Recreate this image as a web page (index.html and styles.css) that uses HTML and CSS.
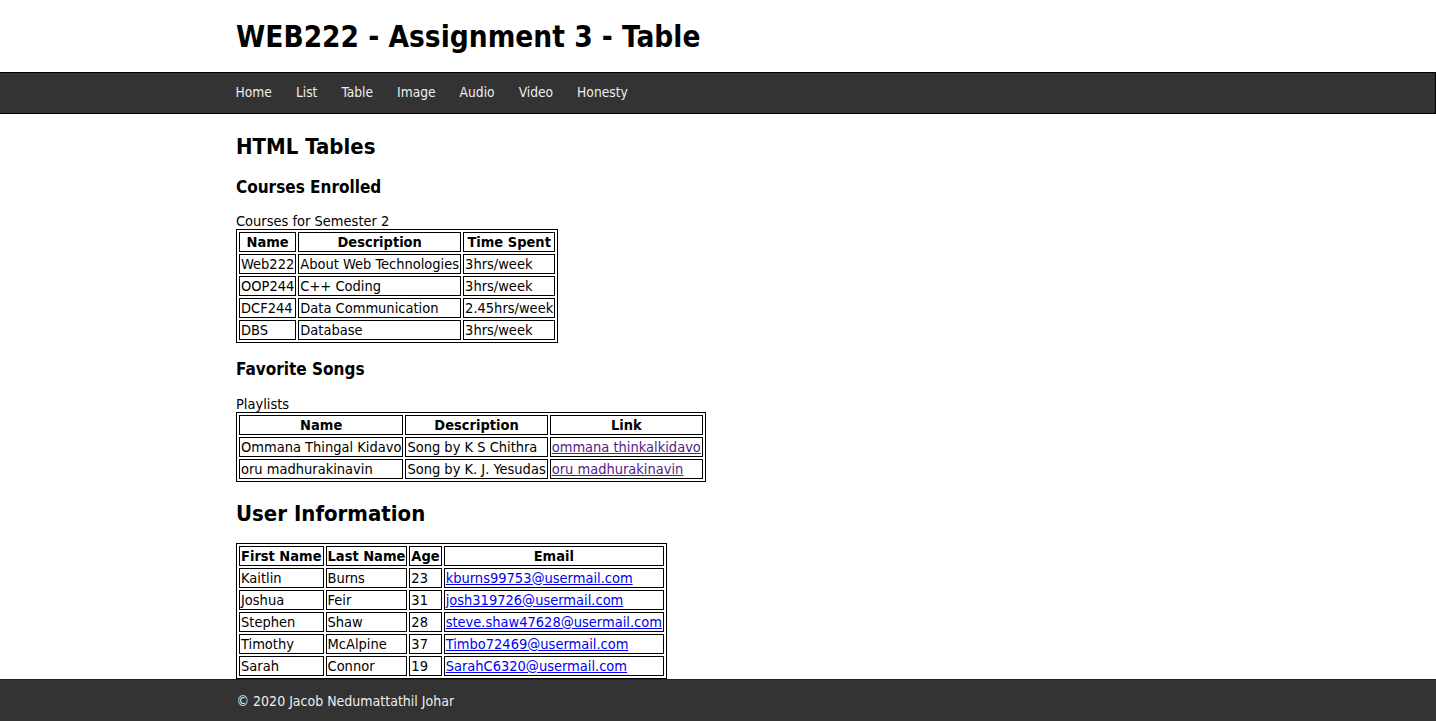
FILE: index.html
```html
<!DOCTYPE html>
<html lang="en">
<head>
<meta charset="utf-8">
<title>WEB222 - Assignment 3 - Table</title>
<link rel="stylesheet" href="styles.css">
</head>
<body>
<header class="site-header">
  <div class="wrap">
    <h1 class="site-title">WEB222 - Assignment 3 - Table</h1>
  </div>
</header>
<nav class="site-nav">
  <div class="wrap nav-list">
    <a class="nav-link" href="#">Home</a>
    <a class="nav-link" href="#">List</a>
    <a class="nav-link" href="#">Table</a>
    <a class="nav-link" href="#">Image</a>
    <a class="nav-link" href="#">Audio</a>
    <a class="nav-link" href="#">Video</a>
    <a class="nav-link" href="#">Honesty</a>
  </div>
</nav>
<main class="wrap content">
  <h2 class="h2 first">HTML Tables</h2>
  <h3 class="h3">Courses Enrolled</h3>
  <table class="tbl">
    <caption class="cap">Courses for Semester 2</caption>
    <tr><th>Name</th><th>Description</th><th>Time Spent</th></tr>
    <tr><td>Web222</td><td>About Web Technologies</td><td>3hrs/week</td></tr>
    <tr><td>OOP244</td><td>C++ Coding</td><td>3hrs/week</td></tr>
    <tr><td>DCF244</td><td>Data Communication</td><td>2.45hrs/week</td></tr>
    <tr><td>DBS</td><td>Database</td><td>3hrs/week</td></tr>
  </table>
  <h3 class="h3 songs">Favorite Songs</h3>
  <table class="tbl">
    <caption class="cap">Playlists</caption>
    <tr><th>Name</th><th>Description</th><th>Link</th></tr>
    <tr><td>Ommana Thingal Kidavo</td><td>Song by K S Chithra</td><td><a class="visited" href="#">ommana thinkalkidavo</a></td></tr>
    <tr><td>oru madhurakinavin</td><td>Song by K. J. Yesudas</td><td><a class="visited" href="#">oru madhurakinavin</a></td></tr>
  </table>
  <h2 class="h2 users">User Information</h2>
  <table class="tbl users-tbl">
    <tr><th>First Name</th><th>Last Name</th><th>Age</th><th class="email-h">Email</th></tr>
    <tr><td>Kaitlin</td><td>Burns</td><td>23</td><td><a class="link" href="#">kburns99753@usermail.com</a></td></tr>
    <tr><td>Joshua</td><td>Feir</td><td>31</td><td><a class="link" href="#">josh319726@usermail.com</a></td></tr>
    <tr><td>Stephen</td><td>Shaw</td><td>28</td><td><a class="link" href="#">steve.shaw47628@usermail.com</a></td></tr>
    <tr><td>Timothy</td><td>McAlpine</td><td>37</td><td><a class="link" href="#">Timbo72469@usermail.com</a></td></tr>
    <tr><td>Sarah</td><td>Connor</td><td>19</td><td><a class="link" href="#">SarahC6320@usermail.com</a></td></tr>
  </table>
</main>
<footer class="site-footer">
  <div class="wrap footer-text">&copy; 2020 Jacob Nedumattathil Johar</div>
</footer>
</body>
</html>
```
FILE: styles.css
```css
html, body {
  margin: 0;
  padding: 0;
}
body {
  font-family: "DejaVu Sans Condensed", "DejaVu Sans", sans-serif;
  font-stretch: condensed;
  font-size: 14.5px;
  line-height: 16px;
  color: #000;
  background: #fff;
}
.wrap {
  width: 964px;
  margin: 0 auto;
}
.site-header {
  height: 72px;
  display: flex;
  align-items: center;
}
.site-title {
  margin: 0;
  font-size: 29.5px;
  line-height: 36px;
  font-weight: bold;
  padding-top: 2px;
}
.site-nav {
  background: #333;
  border: 1px solid #000;
  border-left: none;
  height: 40px;
}
.nav-list {
  display: flex;
  gap: 24px;
  height: 40px;
  align-items: center;
  padding-bottom: 2px;
  box-sizing: border-box;
}
.nav-link {
  color: #eee;
  text-decoration: none;
  font-size: 13.7px;
}
.content {
  padding-top: 19px;
}
.h2 {
  font-size: 22px;
  line-height: 28px;
  font-weight: bold;
  margin: 0;
}
.h3 {
  font-size: 17px;
  line-height: 22px;
  font-weight: bold;
  margin: 15px 0 15px;
}
.songs {
  margin-top: 15px;
  margin-bottom: 16px;
}
.users {
  margin-top: 18px;
  margin-bottom: 15px;
}
.tbl {
  border: 1px solid #000;
  border-spacing: 2px;
}
.cap {
  text-align: left;
}
.tbl th, .tbl td {
  border: 1px solid #000;
  padding: 1px;
  white-space: nowrap;
}
.tbl th {
  font-weight: bold;
  text-align: center;
}
.tbl td {
  text-align: left;
}
.link {
  color: #0000ee;
}
.visited {
  color: #551a8b;
}
.site-footer {
  background: #333;
  border-top: 1px solid #222;
  height: 41px;
  display: flex;
  align-items: center;
}
.footer-text {
  color: #eee;
  font-size: 14px;
  padding-left: 1px;
}
```
